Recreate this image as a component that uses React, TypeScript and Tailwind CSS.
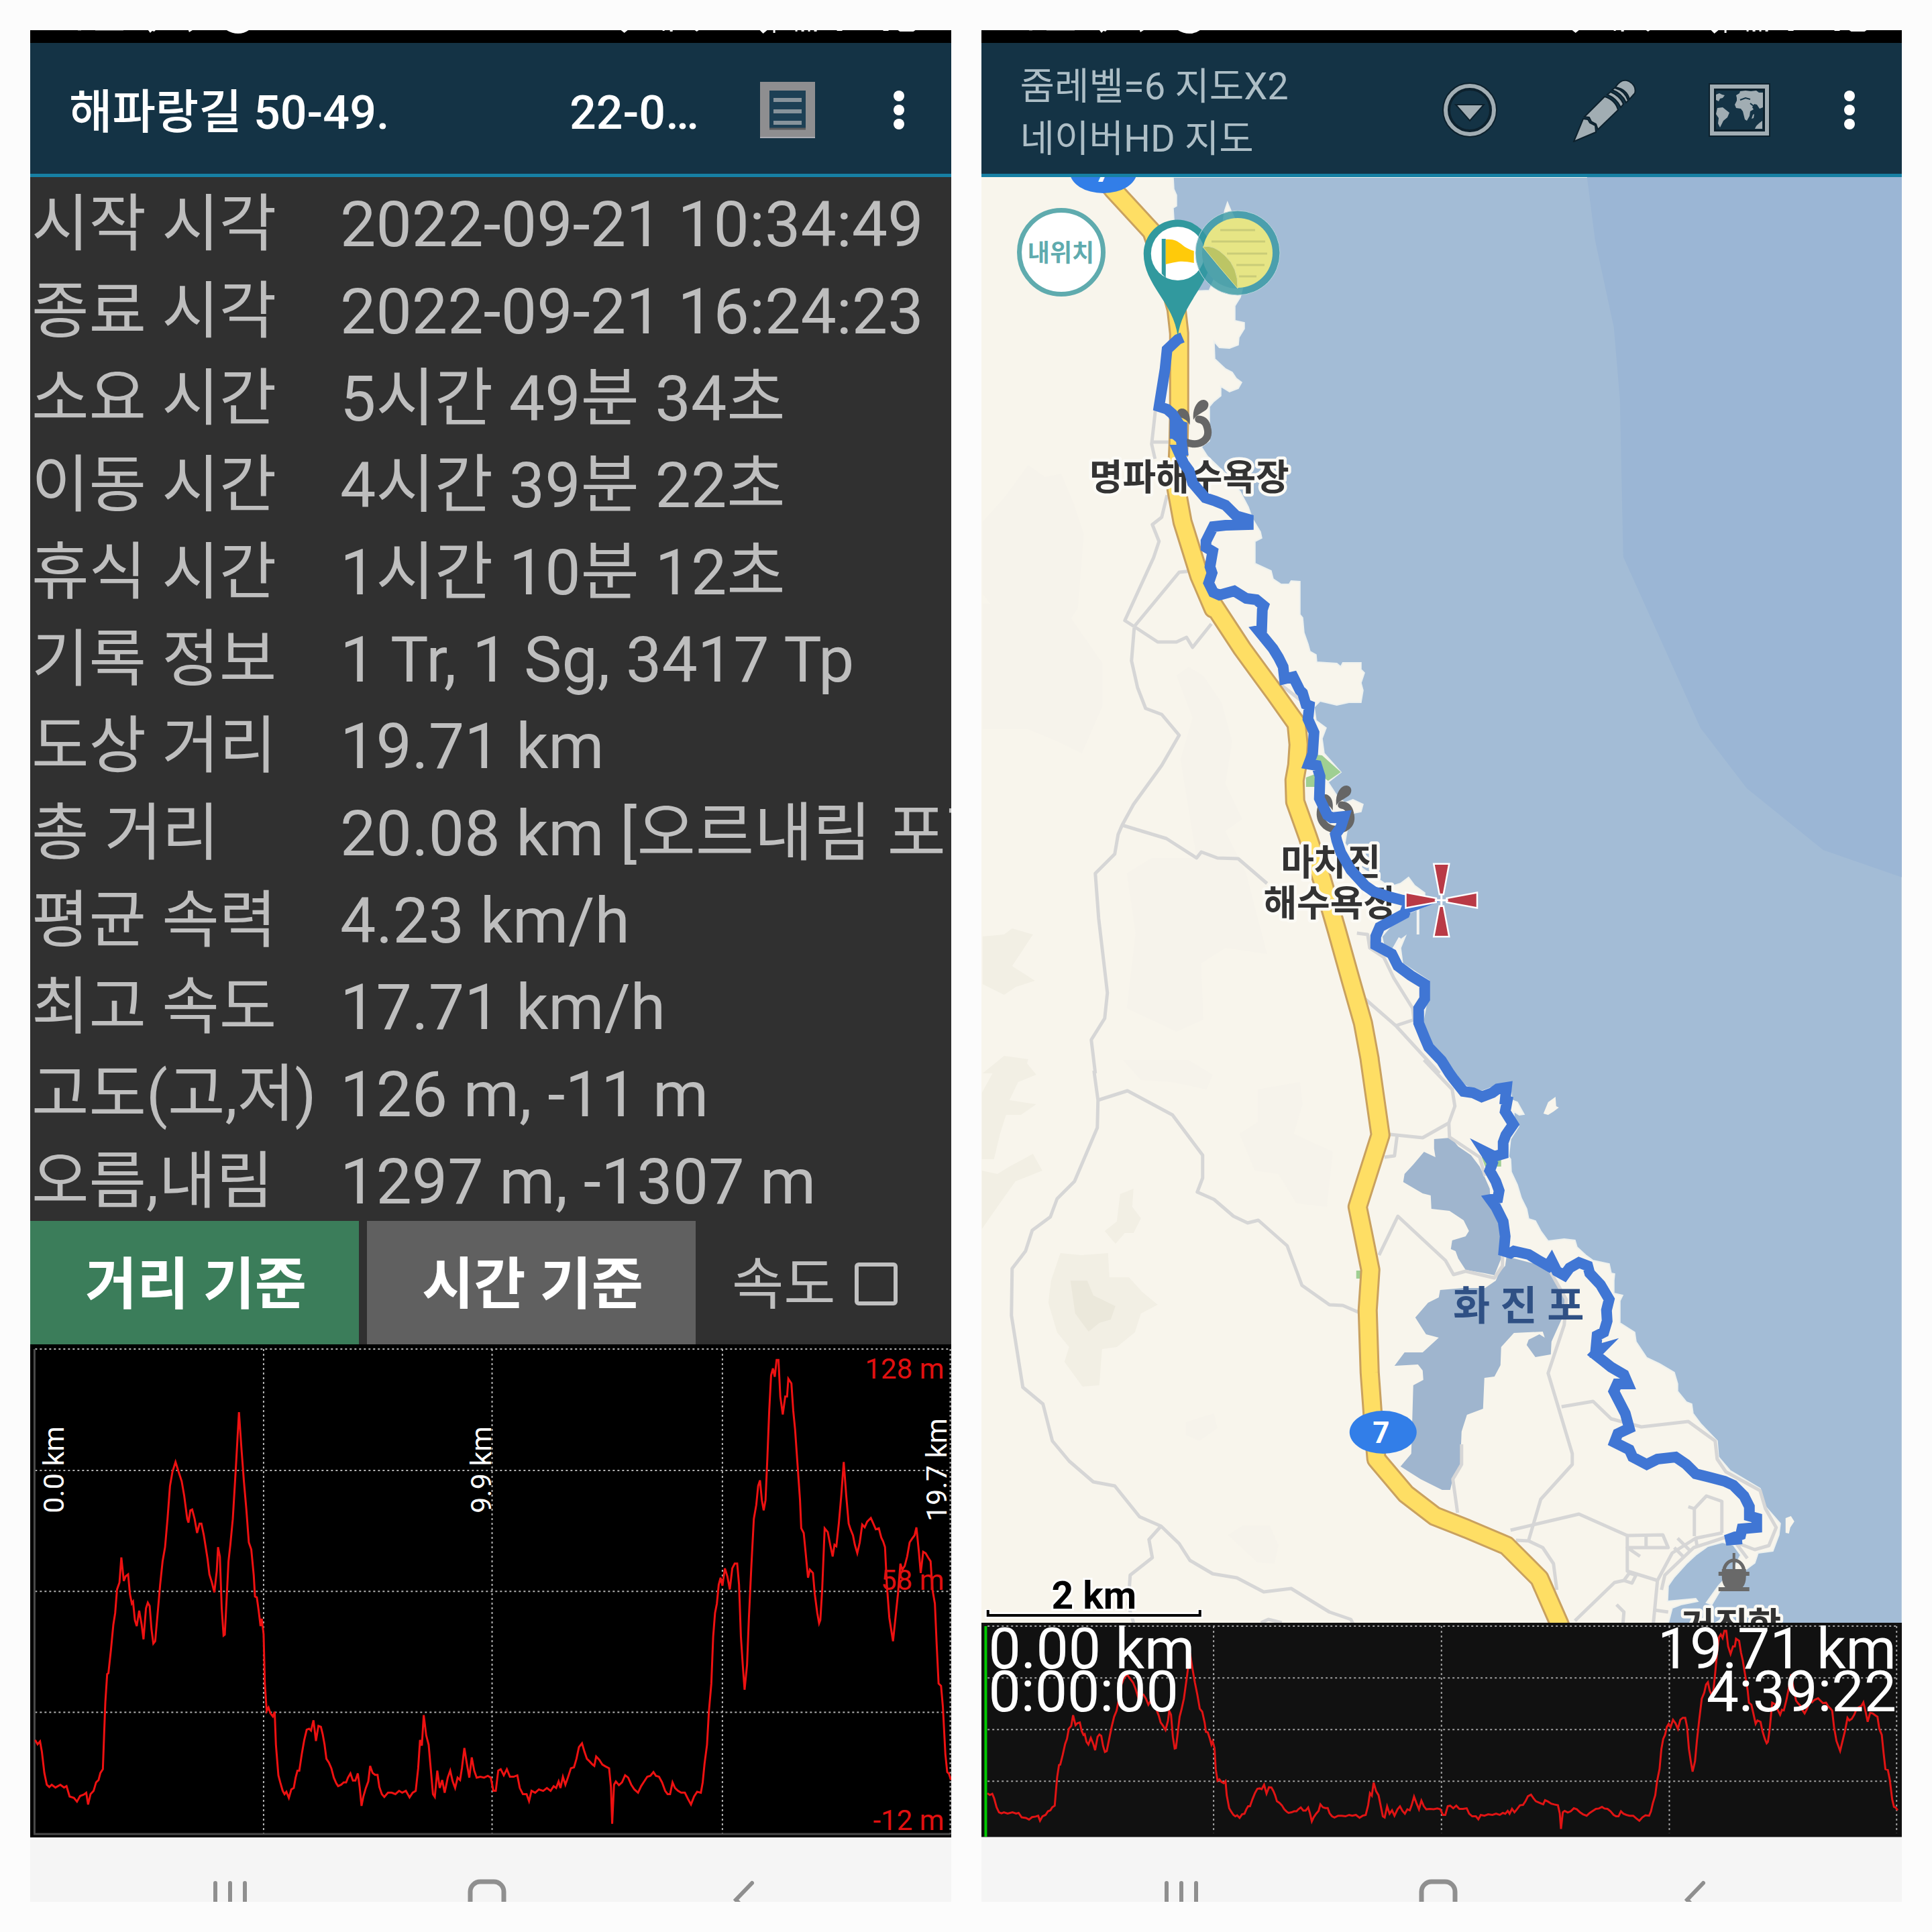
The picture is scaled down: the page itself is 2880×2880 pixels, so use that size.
import type { ReactNode } from "react"

const stats = [
  ["시작 시각", "2022-09-21 10:34:49"],
  ["종료 시각", "2022-09-21 16:24:23"],
  ["소요 시간", "5시간 49분 34초"],
  ["이동 시간", "4시간 39분 22초"],
  ["휴식 시간", "1시간 10분 12초"],
  ["기록 정보", "1 Tr, 1 Sg, 3417 Tp"],
  ["도상 거리", "19.71 km"],
  ["총 거리", "20.08 km [오르내림 포함]"],
  ["평균 속력", "4.23 km/h"],
  ["최고 속도", "17.71 km/h"],
  ["고도(고,저)", "126 m, -11 m"],
  ["오름,내림", "1297 m, -1307 m"],
]

// altitude along the track, x 57 (0 km) to 1544 (19.7 km), y 329 (128 m) to 1359 (-12 m)
const altitude =
  "57,1160 61,1169 65,1163 68,1185 72,1230 76,1255 80,1260 84,1255 90,1261 98,1255 104,1261 108,1258 113,1280 120,1283 125,1291 130,1279 136,1276 140,1272 143,1297 147,1275 152,1268 156,1250 160,1245 163,1230 167,1222 169,1150 171,1080 174,1020 176,1018 180,970 184,915 187,890 190,840 194,825 197,772 201,822 204,812 208,808 211,850 214,870 216,866 219,905 222,918 226,885 230,915 233,946 237,880 240,868 243,875 246,925 249,955 252,950 256,890 260,830 264,780 268,750 272,690 276,620 280,590 285,569 290,590 295,610 299,640 304,690 306,698 309,672 312,670 316,690 320,720 324,700 327,700 331,725 334,750 337,775 340,808 344,825 348,846 352,800 354,750 357,770 360,880 363,938 365,936 368,860 371,780 374,745 378,690 383,580 388,463 392,540 396,610 400,670 404,740 408,755 412,810 414,855 417,857 420,885 423,918 425,902 428,935 430,1040 433,1098 436,1091 439,1103 443,1110 446,1100 448,1170 452,1235 455,1250 459,1268 462,1275 465,1270 469,1283 473,1265 477,1262 480,1240 483,1225 486,1225 490,1190 494,1160 498,1138 502,1136 505,1140 509,1118 513,1162 517,1130 521,1132 524,1148 527,1170 530,1200 534,1208 538,1220 542,1240 546,1252 549,1258 554,1255 558,1250 562,1250 565,1240 569,1231 573,1246 577,1246 581,1231 584,1260 587,1300 590,1280 594,1262 598,1248 601,1215 605,1230 609,1234 613,1234 616,1260 620,1275 624,1281 630,1272 636,1272 642,1275 648,1268 653,1272 659,1268 665,1282 670,1272 675,1268 679,1220 682,1160 685,1172 688,1107 692,1150 696,1170 700,1230 703,1275 706,1281 710,1225 714,1262 718,1245 722,1272 727,1240 731,1225 735,1248 739,1262 743,1240 747,1245 750,1220 754,1177 758,1210 762,1240 766,1197 770,1225 774,1240 780,1238 786,1240 792,1236 797,1240 801,1268 805,1268 809,1225 813,1222 818,1235 823,1222 828,1238 834,1238 840,1235 844,1262 849,1275 855,1275 859,1290 863,1268 869,1272 875,1265 882,1268 888,1262 894,1268 899,1258 903,1262 907,1248 910,1262 914,1238 918,1255 922,1240 927,1220 932,1218 936,1200 940,1175 945,1167 949,1185 953,1200 957,1205 962,1212 965,1215 968,1195 973,1202 978,1212 983,1216 989,1220 992,1260 994,1338 997,1255 1000,1248 1005,1256 1010,1250 1015,1235 1020,1240 1025,1255 1030,1265 1036,1272 1041,1258 1046,1248 1051,1238 1056,1236 1061,1228 1065,1236 1070,1238 1075,1250 1080,1268 1084,1275 1088,1275 1092,1250 1096,1262 1101,1268 1106,1272 1112,1272 1117,1285 1122,1297 1127,1280 1132,1270 1138,1272 1141,1250 1144,1210 1148,1170 1151,1100 1155,1040 1158,940 1161,890 1164,870 1167,830 1170,815 1173,832 1177,795 1181,812 1185,840 1189,795 1193,785 1197,785 1200,830 1203,940 1206,1000 1209,1053 1213,1000 1216,900 1220,790 1224,690 1228,660 1231,620 1234,608 1237,650 1240,672 1243,650 1246,560 1249,460 1252,385 1255,370 1258,388 1261,352 1264,352 1267,430 1271,468 1275,430 1278,430 1280,392 1285,402 1288,460 1291,500 1295,575 1299,650 1301,710 1305,720 1308,760 1312,815 1315,798 1320,805 1323,850 1327,890 1330,912 1332,905 1335,840 1339,710 1344,718 1348,745 1352,770 1355,745 1358,748 1362,700 1366,640 1370,569 1374,640 1378,700 1381,712 1385,725 1388,745 1392,763 1396,740 1400,702 1404,708 1408,696 1414,688 1418,700 1422,712 1427,710 1431,730 1434,738 1437,750 1440,830 1444,900 1450,950 1454,900 1458,850 1462,785 1465,798 1469,790 1473,770 1477,740 1481,732 1485,725 1488,708 1492,760 1495,805 1499,760 1503,763 1507,772 1511,780 1514,840 1518,870 1521,960 1524,1040 1528,1045 1531,1090 1535,1190 1538,1228 1541,1232 1544,1245"

// The map was digitised in four sheets, each with its own grid.
type Sheet = { x: number; y: number; sx: number; sy: number }
const north: Sheet = { x: 1460, y: 260, sx: 0.6122, sy: 0.4464 }
const middle: Sheet = { x: 1460, y: 900, sx: 0.6122, sy: 0.4464 }
const west: Sheet = { x: 1460, y: 1580, sx: 0.4464, sy: 0.5485 }
const south: Sheet = { x: 2000, y: 1580, sx: 0.5357, sy: 0.5485 }

const place = (sheet: Sheet, points: string) =>
  points
    .split(" ")
    .map((p) => {
      const [x, y] = p.split(",").map(Number)
      return `${Math.round(sheet.x + x * sheet.sx)},${Math.round(sheet.y + y * sheet.sy)}`
    })
    .join(" ")

const coast = [
  place(
    north,
    "472,8 474,50 481,70 480,105 472,112 474,150 490,220 520,300 525,390 560,388 575,340 590,200 598,120 605,95 613,120 640,200 650,330 635,410 622,440 622,488 645,495 645,515 632,545 630,570 610,580 585,578 572,558 574,615 600,650 615,660 625,680 638,695 630,715 610,725 588,708 588,740 570,760 560,775 560,890 540,910 555,940 600,1000 635,1060 655,1110 665,1150 685,1195 688,1215 672,1225 672,1300 710,1325 715,1350 735,1368 755,1368 760,1358 780,1360 780,1470 788,1480 790,1530 800,1568"
  ),
  place(
    middle,
    "805,160 820,170 822,195 870,200 880,210 885,198 930,198 930,220 937,230 930,265 935,290 930,330 900,330 870,338 830,325 815,345 820,390 845,415 835,450 840,500 880,562 850,595 870,640 890,665 910,655 935,670 930,695 912,700 895,760 890,800 930,880 1000,945 1025,935 1045,915 1060,940 1085,965 1085,1010 1050,1030 1035,1050 1000,1080 980,1110 985,1140 1005,1155 1020,1130 1038,1110 1025,1150 1030,1200 1095,1260 1090,1330 1080,1400 1100,1480 1155,1568"
  ),
  place(
    south,
    "312,36 345,72 385,88 430,72 468,68 475,110 490,115 508,148 495,150 480,140 480,160 492,180 470,215 465,262 470,270 472,305 490,340 500,375 515,405 520,432 540,438 555,465 575,492 620,486 650,490 655,508 680,530 700,545 745,555 750,580 760,582 757,600 757,635 783,640 775,655 775,715 815,740 820,765 850,810 885,825 925,850 935,880 935,900 960,930 975,935 978,960 1000,990 1045,1035 1050,1080 1080,1115 1165,1165 1180,1215 1220,1260 1218,1290 1200,1335 1160,1340 1150,1368 1130,1382 1055,1440 1030,1480 1015,1475 1050,1430 1090,1385 1110,1345 1090,1318 1060,1310 1020,1322 985,1345 960,1370 925,1405 910,1430 908,1472 985,1464 992,1472 945,1480 920,1490 900,1568"
  ),
].join(" ")

const islands = [
  place(south, "562,145 575,115 595,100 597,125 605,130 590,140 575,150"),
  place(south, "1236,1285 1235,1245 1250,1240 1260,1255 1248,1270 1245,1288"),
]

const lakes = [
  place(
    south,
    "258,215 305,212 325,235 360,258 385,290 400,320 412,350 415,385 440,440 445,500 445,540 425,585 400,580 345,570 325,540 318,520 305,515 308,490 345,480 355,465 340,435 300,410 250,405 248,368 225,362 172,332 175,310 200,285 230,250 262,265 258,240"
  ),
  place(
    south,
    "440,575 455,560 460,535 560,560 600,600 620,640 622,690 610,710 585,765 582,800 540,808 515,775 520,760 550,745 565,755 560,738 480,742 445,780 443,830 425,860 397,865 393,948 350,965 335,1010 330,1100 312,1130 303,1168 280,1168 220,1140 165,1105 195,1070 200,885 228,870 225,845 212,828 147,832 175,795 225,795 270,755 235,745 205,700 240,660 270,645 275,625 340,620 400,620 430,600"
  ),
]

const highway = [
  place(north, "300,10 325,50 420,190 455,330 480,450 487,530 487,800 485,900 480,1050 495,1160 535,1340 570,1450"),
  place(middle, "568,0 640,150 720,300 772,400 778,470 775,540 768,590 770,660 800,780 835,920 870,1090 905,1260 935,1400 950,1520"),
  place(south, "78,0 108,205 45,400 60,470 80,570 72,680 78,850 90,1000 98,1085 180,1180 260,1240 350,1275 460,1320 550,1410 605,1530 625,1580"),
].join(" ")

const track = [
  place(
    north,
    "495,545 484,550 458,585 452,650 437,775 458,785 470,800 485,830 478,870 492,885 495,920 484,920 498,965 512,990 520,1030 550,1080 575,1090 600,1105 625,1140 655,1152 655,1170 600,1172 570,1177 552,1225 552,1245 568,1260 562,1310 566,1330 558,1365 570,1395 585,1405 620,1392 650,1415 675,1420 692,1440"
  ),
  place(
    middle,
    "690,20 688,88 680,90 715,150 728,180 740,210 743,250 765,245 780,290 788,298 795,335 803,340 800,385 815,430 812,500 802,535 822,540 830,575 828,650 848,705 858,715 888,710 880,745 868,770 870,790 880,830 905,890 940,940 960,960 1000,978 1030,990 1075,1000 1040,1018 1035,1035 975,1080 965,1110 965,1140 1005,1170 1020,1210 1050,1240 1085,1270 1085,1320 1070,1350 1070,1400 1085,1450 1095,1480 1125,1525 1145,1568"
  ),
  place(
    south,
    "310,50 340,85 365,90 390,100 420,90 435,78 460,75 455,110 462,112 455,140 478,175 458,205 450,225 450,255 425,262 400,250 420,280 412,300 430,330 438,355 435,375 415,380 430,400 450,440 455,480 452,520 470,525 480,520 520,528 548,545 575,560 585,545 600,575 620,585 635,565 660,550 685,560 690,580 720,610 745,650 738,680 740,710 730,740 712,750 708,790 720,785 706,800 750,835 785,855 798,880 768,880 758,900 790,960 800,1000 770,1015 760,1040 800,1060 810,1080 850,1100 880,1085 930,1080 960,1100 985,1125 1030,1135 1065,1145 1090,1155 1120,1185 1135,1215 1135,1240 1155,1245 1155,1270 1115,1275 1110,1290 1070,1305 1115,1302"
  ),
].join(" ")

const roads = [
  place(north, "430,780 420,900 428,950"),
  place(north, "420,893 460,893"),
  place(north, "458,1070 445,1145 422,1170 437,1225 425,1280 355,1490 378,1510"),
  place(north, "520,1325 487,1328 378,1510"),
  place(north, "378,1510 435,1562 480,1562 505,1545 520,1580 565,1500"),
  place(middle, "378,80 370,190 385,280 405,350 445,370 487,440 445,540 375,670 348,740 338,770 330,835 282,900 290,1050 312,1300 305,1385 272,1455 282,1568"),
  place(middle, "348,740 455,783 530,850 540,828 580,850 630,852 700,935"),
  place(middle, "920,1100 945,1105 950,1150 985,1180 1010,1250 1055,1350 1058,1390 1015,1408"),
  place(middle, "940,1320 1015,1410 1120,1568"),
  place(middle, "720,255 780,320"),
  place(west, "382,30 397,110 395,185 318,330 260,378 237,427 178,463 155,520 110,567 108,695 145,890 213,935 245,1035 300,1090 380,1147 453,1158 535,1242 608,1268 668,1315 703,1360 780,1397 860,1408 950,1445 1042,1436 1170,1500 1240,1520 1250,1535"),
  place(west, "397,110 495,83 645,150 747,258 747,320 728,360 785,380 850,424 895,443 932,435 1028,505 1078,612 1170,666 1215,668 1265,685"),
  place(west, "608,1268 567,1303 577,1352 505,1400 498,1480 515,1530"),
  place(west, "940,1530 965,1520 1010,1530"),
  place(south, "135,203 225,212 298,172 315,125 308,80 230,0"),
  place(south, "298,172 300,210 385,265 400,315"),
  place(south, "155,205 147,260 120,265"),
  place(south, "105,530 157,425 290,545 312,583 345,575 425,592 448,560 448,530"),
  place(south, "580,575 625,650 620,720 575,852 642,1070 642,1100 555,1195 520,1305"),
  place(south, "612,942 700,928 750,975 835,998 965,983 1040,1035 1045,1085 1070,1120 1165,1170 1180,1220 1210,1270 1190,1320 1150,1330 1095,1310 1130,1355"),
  place(south, "335,1045 335,1100 310,1140 323,1230"),
  place(south, "470,1278 660,1235 795,1293 795,1390 880,1415"),
  place(south, "485,1305 520,1307 560,1325 590,1370 600,1440"),
  place(south, "795,1293 895,1290 910,1325 795,1325 830,1350"),
  place(south, "848,1290 848,1325"),
  place(south, "650,1525 760,1420 785,1415 800,1395 820,1400 808,1422 785,1415"),
  place(south, "982,1295 982,1220 965,1215"),
  place(south, "982,1220 1015,1185 1058,1200 1058,1285"),
  place(south, "1060,1285 985,1300 920,1340 880,1415 865,1568"),
  place(south, "1065,1298 980,1325 900,1400 890,1440"),
  place(south, "935,1300 970,1335"),
  place(south, "925,1325 950,1350"),
  place(south, "985,1300 990,1320"),
  place(south, "765,1480 785,1500 780,1568"),
  place(south, "870,1495 910,1500"),
]

const slopes = [
  place(north, "8,1160 60,1080 120,970 160,1010 200,1000 230,1100 255,1200 240,1450 180,1568 100,1568 8,1400"),
  place(middle, "8,0 200,0 300,200 300,340 250,500 190,460 120,420 8,420"),
  place(middle, "480,240 510,210 545,240 590,330 615,460 600,600 640,720 600,760 650,900 700,1170 600,1150 540,1200 545,1390 480,1430 360,1350 380,1100 360,900 420,850 530,850 490,520 520,380"),
  place(west, "930,80 1070,60 1080,120 1050,200 1180,250 1160,400 1060,390 1000,310 920,300 870,200 930,170"),
  place(west, "690,985 785,960 795,1000 735,1035 690,1020"),
  place(west, "830,1290 880,1265 970,1265 1000,1320 985,1370 930,1365"),
  place(west, "480,0 700,0 780,40 760,80 640,60 540,55"),
]

const hills = [
  place(middle, "8,1110 60,1105 80,1085 130,1105 100,1170 80,1210 135,1260 90,1280 60,1305 8,1270"),
  place(middle, "8,1568 60,1510 120,1520 110,1568"),
  place(west, "8,90 50,30 70,0 150,0 190,40 130,60 100,110 190,120 140,150 90,150 70,200 50,270 8,270"),
  place(west, "8,300 60,310 100,290 180,255 210,300 120,330 60,400 8,460"),
  place(west, "270,525 340,530 430,525 435,590 500,590 545,630 595,665 540,690 520,740 460,780 410,785 400,885 345,888 285,820 300,780 260,740 230,660 240,600"),
  place(west, "470,365 515,350 510,400 540,430 515,470 485,470 455,500 418,465 460,440"),
]

const parks = [
  place(middle, "820,505 835,507 880,562 850,592 820,560"),
  place(middle, "795,580 835,560 818,612 795,612"),
  place(west, "1258,572 1278,572 1278,595 1258,595"),
  place(south, "390,265 445,265 445,290 400,290"),
]

const StatusBar = () => (
  <div className="h-[19px] bg-black">
    <svg className="h-[19px] w-full" viewBox="0 0 1373 19" preserveAspectRatio="none" fill="#fff">
      <path d="M97 0h42v1h-42zM71 0h5v1h-5z" opacity="0.3" />
      <path d="M172 0h4l3 4 3-3 3 1 2-2h-15zM236 0h6l-5 3zM293 0h33q-7 5-16 5t-17-5z" />
      <path d="M881 0h10l-5 4zM943 0h3v1h-3zM954 0h4v2h-4zM991 0h6l-3 2zM1088 0h11l-6 5zM1108 0h3v4h-3zM1141 0h3v2h-3zM1150 0h4v2h-4zM1160 0h3v2h-3zM1169 0h4v2h-4z" />
      <path d="M1203 0h8v1h-8zM1272 0h8v1h-8zM1294 0h26l-3 2h-20z" />
    </svg>
  </div>
)

const MoreButton = () => (
  <button type="button" aria-label="more" className="flex h-full w-32 items-center justify-center">
    <svg width="18" height="60" viewBox="0 0 18 60" fill="#fff">
      <circle cx="9" cy="9" r="8" />
      <circle cx="9" cy="30" r="8" />
      <circle cx="9" cy="51" r="8" />
    </svg>
  </button>
)

const NavBar = () => (
  <nav className="grid h-24 grid-cols-3 items-end bg-[#f5f5f5] pr-[117px] pl-[107px]">
    <button type="button" aria-label="recent apps" className="flex justify-center">
      <svg width="52" height="32" viewBox="0 0 52 32" stroke="#8f8f8f" strokeWidth="6" strokeLinecap="round">
        <path d="M4 4v40M26 4v40M48 4v40" />
      </svg>
    </button>
    <button type="button" aria-label="home" className="flex justify-center">
      <svg width="58" height="34" viewBox="0 0 58 34" stroke="#8f8f8f" strokeWidth="7" fill="none">
        <rect x="4" y="4" width="50" height="54" rx="15" />
      </svg>
    </button>
    <button type="button" aria-label="back" className="flex justify-center">
      <svg width="34" height="32" viewBox="0 0 34 32" stroke="#8f8f8f" strokeWidth="6" fill="none" strokeLinecap="round">
        <path d="M29 4L5 29l24 25" />
      </svg>
    </button>
  </nav>
)

const Header = ({ children }: { children: ReactNode }) => (
  <header className="flex h-[200px] items-center border-b-[5px] border-[#1780a3] bg-[#143345] pt-1 pr-[14px] pl-[58px]">
    {children}
  </header>
)

const TrackInfo = () => (
  <section className="flex min-w-0 flex-col overflow-hidden bg-[#303030]">
    <StatusBar />
    <Header>
      <h1 className="flex flex-1 pt-2 text-[70px] leading-none font-medium whitespace-nowrap text-white">
        <span className="w-[746px]">해파랑길 50-49.</span>
        <span>22-0…</span>
      </h1>
      <button type="button" aria-label="list" className="flex h-full w-[204px] items-center justify-center">
        <svg width="84" height="86" viewBox="0 0 84 86">
          <rect x="1" y="1" width="82" height="84" fill="#8e8e90" />
          <path d="M1 84h82" stroke="#a9acb4" strokeWidth="2" />
          <rect x="15" y="14" width="54" height="58" fill="#1d4055" />
          <path d="M15 71h54" stroke="#5c5c5e" strokeWidth="3" />
          <path d="M21 28h42M21 45h42M21 62h42" stroke="#87939b" strokeWidth="6" />
        </svg>
      </button>
      <MoreButton />
    </Header>

    <div className="grid flex-1">
      <table className="w-full table-fixed border-collapse text-left leading-none text-[#bebebe]">
        <tbody>
          {stats.map(([label, value]) => (
            <tr key={label}>
              <th scope="row" className="w-[462px] p-0 pt-3 pl-[2px] text-[93px] font-normal whitespace-nowrap">
                {label}
              </th>
              <td className="overflow-hidden p-0 pt-3 text-[95px] whitespace-nowrap">{value}</td>
            </tr>
          ))}
        </tbody>
      </table>
    </div>

    <div className="flex h-[184px] gap-3 text-[84px] leading-none">
      <button type="button" className="w-[490px] bg-[#3b7d5a] pt-2 pl-1 font-bold text-white">
        거리 기준
      </button>
      <button type="button" className="w-[490px] bg-[#606060] pt-2 pl-1 font-bold text-white">
        시간 기준
      </button>
      <label className="flex flex-1 items-center gap-[28px] pt-1 pl-[42px] text-[#bebebe]">
        <span className="pt-1">속도</span>
        <input
          type="checkbox"
          className="size-[64px] appearance-none rounded-md border-[6px] border-[#c0c0c0]"
        />
      </label>
    </div>

    <div className="relative h-[735px] bg-black">
      <svg className="h-full w-full" viewBox="49 319 1495 1048" preserveAspectRatio="none" fill="none">
        <g stroke="#b4b4b4" strokeWidth="2" strokeDasharray="3 4">
          <path vectorEffect="non-scaling-stroke" d="M57 329H1544M57 587H1544M57 844H1544M57 1101H1544" />
          <path vectorEffect="non-scaling-stroke" d="M428 329V1359M799 329V1359M1173 329V1359M1543 329V1359" />
        </g>
        <path vectorEffect="non-scaling-stroke" d="M56 329V1360H1544" stroke="#4a4a4a" strokeWidth="3" />
        <polyline vectorEffect="non-scaling-stroke" points={altitude} stroke="#ee1111" strokeWidth="3" />
      </svg>
      <div className="absolute inset-0 text-[42px] leading-none">
        <span className="absolute top-[122px] left-[14px] rotate-180 text-[43px] text-white [writing-mode:vertical-rl]">
          0.0 km
        </span>
        <span className="absolute top-[122px] left-[651px] rotate-180 text-[43px] text-white [writing-mode:vertical-rl]">
          9.9 km
        </span>
        <span className="absolute top-[110px] right-0 rotate-180 text-[43px] text-white [writing-mode:vertical-rl]">
          19.7 km
        </span>
        <span className="absolute top-[16px] right-[10px] text-[#e01010]">128 m</span>
        <span className="absolute top-[331px] right-[10px] text-[#e01010]">58 m</span>
        <span className="absolute right-[10px] bottom-[4px] text-[#e01010]">-12 m</span>
      </div>
    </div>
    <NavBar />
  </section>
)

const SpaMark = ({ x, y }: { x: number; y: number }) => (
  <g transform={`translate(${x} ${y})`}>
    <path d="M8 32C-4 74 60 76 51 42Q49 30 38 29" fill="none" stroke="#666" strokeWidth="11" strokeLinecap="round" />
    <path d="M31 27C30 12 38 0 46 1c8 2 7 11 0 15-6 4-11 6-15 11z" fill="#666" stroke="#666" strokeWidth="2" />
    <path d="M24 34C25 22 20 13 12 14c-7 2-6 9-1 11 6 2 10 4 13 9z" fill="#666" stroke="#666" strokeWidth="2" />
  </g>
)

const CoastMap = () => (
  <svg className="absolute inset-0 h-full w-full" viewBox="1463 264 1373 2155" preserveAspectRatio="xMidYMid slice">
    <rect x="1463" y="264" width="1373" height="2155" fill="#f8f5ec" />
    {slopes.map((p) => (
      <polygon key={p} points={p} fill="#f6f3eb" />
    ))}
    {hills.map((p) => (
      <polygon key={p} points={p} fill="#f2efe4" />
    ))}
    <polygon points={place(west, "305,600 360,600 380,640 455,670 440,705 400,715 365,738 320,690")} fill="#ebe8db" />
    <polygon points={`${coast} 2836,2440 2836,264`} fill="#a3bcd6" stroke="#eef1ee" strokeWidth="2" />
    <path d="M2366 264L2378 358 2406 488 2415 595 2420 830 2535 1085 2604 1175 2718 1267 2836 1308V264z" fill="#9bb6d5" />
    {islands.map((p) => (
      <polygon key={p} points={p} fill="#f8f5ec" />
    ))}
    {lakes.map((p) => (
      <polygon key={p} points={p} fill="#9fb5ce" />
    ))}
    {parks.map((p) => (
      <polygon key={p} points={p} fill="#9fcf92" />
    ))}
    <g fill="none" strokeLinejoin="round">
      {roads.map((p) => (
        <polyline key={p} points={p} stroke="#d6d6d6" strokeWidth="5" />
      ))}
      <polyline points={highway} stroke="#c9a15f" strokeWidth="30" />
      <polyline points={highway} stroke="#fede64" strokeWidth="24" />
    </g>
    <path d="M2114 1350V1393M2087 1398l-9 16" stroke="#f3f3f0" strokeWidth="4" />

    <SpaMark x={1749} y={596} />
    <SpaMark x={1962} y={1171} />
    <g transform="translate(2561 2315)" fill="#696969">
      <path d="M9 28a15 17 0 0 1 30 0" fill="none" stroke="#696969" strokeWidth="5" />
      <path d="M22 0h4v26h-4zM6 24h36v4h5v6h-5q0 12-5 17h10v6H1v-6h10q-5-5-5-17H1v-6h5z" />
    </g>

    <g fontWeight="700" fontSize="54" textAnchor="middle" fill="#333" stroke="#fbfaf5" strokeWidth="9" strokeLinejoin="round" className="[paint-order:stroke]">
      <text x="1773" y="731">명파해수욕장</text>
      <text x="1984" y="1305">마차진</text>
      <text x="1983" y="1366">해수욕장</text>
      <text x="2581" y="2443">거진항</text>
    </g>
    <text x="2264" y="1968" fontSize="60" fontWeight="700" textAnchor="middle" fill="#2f5084">
      화 진 포
    </text>

    <ellipse cx="1645" cy="256" rx="50" ry="32" fill="#327ee8" />
    <ellipse cx="2062" cy="2135" rx="50" ry="32" fill="#327ee8" />
    <g fontSize="44" fontWeight="700" textAnchor="middle" fill="#fff">
      <text x="1645" y="271">7</text>
      <text x="2059" y="2151">7</text>
    </g>

    <polyline points={track} fill="none" stroke="#4076d4" strokeWidth="16" strokeLinejoin="miter" />
    <path d="M1744 620l10 4 16 6v26l-26-2z" fill="#4076d4" />

    <path d="M1756 502C1750 450 1705 425 1705 378a50 50 0 0 1 101 0C1806 425 1762 450 1756 502z" fill="#31999e" />
    <circle cx="1756" cy="378" r="40" fill="#fff" />
    <path d="M1732 356h6v58l-6-6z" fill="#31999e" />
    <path d="M1738 357c22-2 22 12 42 17v18c-20-4-24-2-42 2z" fill="#ffca0a" />

    <g fill="#b93a46" stroke="#fff" strokeWidth="5" className="[paint-order:stroke]">
      <path d="M2139 1289h20l-8 43h-4zM2139 1395h20l-8-43h-4zM2097 1332v20l43-8v-4zM2201 1332v20l-43-8v-4z" />
    </g>
    <path d="M2139 1342h20M2149 1332v20" stroke="#fff" strokeWidth="3" />

    <g stroke="#fff" strokeWidth="6" fontSize="57" fontWeight="700" className="[paint-order:stroke]">
      <text x="1631" y="2398" textAnchor="middle">2 km</text>
      <path d="M1473 2399V2408H1789V2399" fill="none" strokeWidth="9" />
      <path d="M1473 2400V2408H1789V2400" fill="none" stroke="#000" strokeWidth="4" />
    </g>
  </svg>
)

const TrackMap = () => (
  <section className="flex min-w-0 flex-col overflow-hidden bg-[#111]">
    <StatusBar />
    <Header>
      <p className="flex-1 pt-2 text-[56px] leading-[78px] whitespace-nowrap text-[#adbec6]">
        줌레벨=6 지도X2
        <br />
        네이버HD 지도
      </p>
      <button type="button" aria-label="menu" className="flex h-full w-[201px] items-center justify-center">
        <svg width="84" height="84" viewBox="0 0 84 84">
          <circle cx="42" cy="42" r="35" fill="none" stroke="#0d212d" strokeWidth="12" />
          <circle cx="42" cy="42" r="36" fill="none" stroke="#a1adb3" strokeWidth="6" />
          <path d="M21 34h42L42 58z" fill="#a1adb3" stroke="#0d212d" strokeWidth="2" />
        </svg>
      </button>
      <button type="button" aria-label="edit" className="flex h-full w-[201px] items-center justify-center">
        <svg width="96" height="96" viewBox="0 0 96 96" fill="#a1adb3" stroke="#0d212d" strokeWidth="2">
          <path d="M64 14Q73 0 84 5q12 7 9 18L85 32Q81 17 64 14z" />
          <path d="M59 18l4-3q15 4 20 19l-3 3Q74 23 59 18z" />
          <path d="M52 25l5-4q14 6 19 18l-4 5Q66 31 52 25z" />
          <path d="M18 58L48 28q16 5 20 20L38 77l-3-8-7-4-3-6z" />
          <path d="M2 95L16 61l7 1 3 5 8 4 1 10z" />
        </svg>
      </button>
      <button type="button" aria-label="map" className="flex h-full w-[201px] items-center justify-center">
        <svg width="92" height="80" viewBox="0 0 92 80" fill="#a1adb3">
          <path d="M0 0h92v80H0z" fill="#0d212d" />
          <path d="M2 2h88v76H2zM8 8v64h76V8z" fillRule="evenodd" />
          <path d="M11 11h70v58H11z" fill="#143345" />
          <path d="M11 17l5-2 4 2 4 1-3 4-4 1-2 4-4-2zM13 37l8-1 10 8-3 7-6 5-5 10-3-6 1-8-4-6z" />
          <path d="M42 22l-1-4 5-3 1-3 8-1 8 1 8-1 4 3h6v22l-5 2-4-6-4-1-3 5 2 3-5 3-1 7-4 7-3-2-3-12-3-4-7-1-2-5 3-6zM80 56v12H69q1-5 11-12zM66 47l2-1-1 6-3 1z" />
          <path d="M47 25l8-3 7 2M62 30l5 4" stroke="#143345" strokeWidth="2" fill="none" />
        </svg>
      </button>
      <MoreButton />
    </Header>

    <div className="relative flex-1">
      <CoastMap />
      <button
        type="button"
        className="absolute top-[46px] left-[53px] size-[132px] rounded-full border-[7px] border-[#5fabae] bg-white pt-1 text-[36px] font-bold text-[#5fabae]"
      >
        내위치
      </button>
      <button type="button" aria-label="memo" className="absolute top-[49px] left-[318px] size-[128px]">
        <svg viewBox="0 0 128 128">
          <circle cx="64" cy="64" r="63" fill="#3597a2" fillOpacity="0.8" stroke="#b9d5dc" strokeWidth="1" />
          <circle cx="64" cy="64" r="52" fill="#e6e585" />
          <path d="M12 55A52 52 0 0 0 64 117L35 83z" fill="#4fa2ab" />
          <path d="M12 55q16-4 33 13 20 18 19 49L35 83z" fill="#bcc565" stroke="#dcdf9c" strokeWidth="1" />
          <path d="M38 30h52M25 47h80M48 65h60M62 82h42M66 99h26" stroke="#c9cc78" strokeWidth="3" />
        </svg>
      </button>
    </div>

    <div className="relative h-[320px] border-b border-[#9a9a9a]">
      <svg className="h-full w-full" viewBox="25 117 1495 961" preserveAspectRatio="none" fill="none">
        <g stroke="#a0a0a0" strokeWidth="2" strokeDasharray="3 4">
          <path vectorEffect="non-scaling-stroke" d="M35 132H1512M35 365H1512M35 597H1512M35 829H1512" />
          <path vectorEffect="non-scaling-stroke" d="M402 132V1061M772 132V1061M1142 132V1061M1511 132V1061" />
        </g>
        <g transform="translate(-22 -165) scale(0.994 0.903)">
          <polyline vectorEffect="non-scaling-stroke" points={altitude} stroke="#e01414" strokeWidth="3" />
        </g>
        <path vectorEffect="non-scaling-stroke" d="M32 132V1078" stroke="#00c800" strokeWidth="4" />
      </svg>
      <div className="absolute inset-x-0 top-[7px] flex justify-between pr-2 pl-[11px] text-[86px] leading-[64px] text-white">
        <p>
          0.00 km
          <br />
          0:00:00
        </p>
        <p className="text-right">
          19.71 km
          <br />
          4:39:22
        </p>
      </div>
    </div>
    <NavBar />
  </section>
)

export default function App() {
  return (
    <main className="grid min-h-screen grid-cols-2 gap-[45px] bg-[#fcfcfc] px-[45px] py-[45px] font-['Roboto','Noto_Sans_CJK_KR',sans-serif]">
      <TrackInfo />
      <TrackMap />
    </main>
  )
}
